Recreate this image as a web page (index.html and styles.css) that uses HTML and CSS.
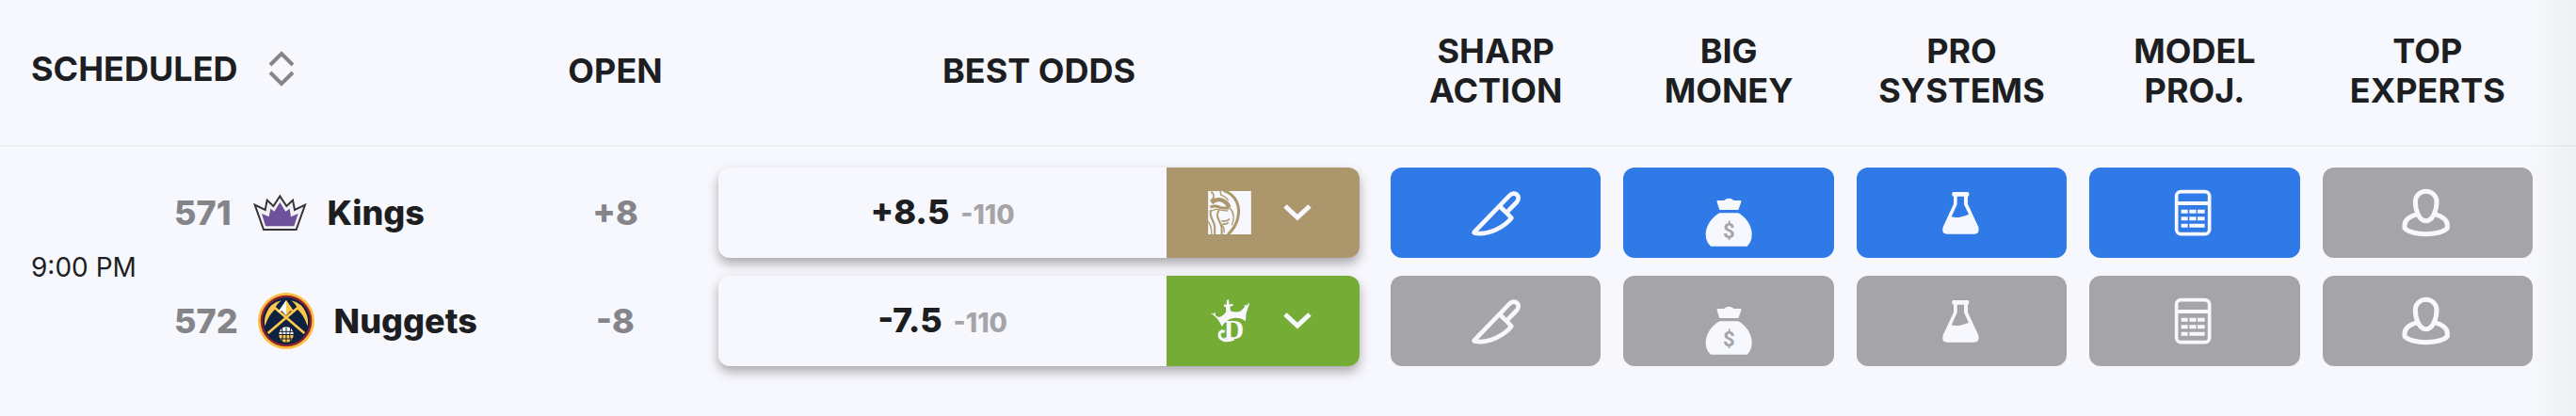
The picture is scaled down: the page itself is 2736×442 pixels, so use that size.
FILE: index.html
```html
<!DOCTYPE html>
<html lang="en">
<head>
    <meta charset="UTF-8">
    <meta name="viewport" content="width=device-width, initial-scale=1.0">
    <link rel="stylesheet" href="styles.css">
    <title>NBA Odds</title>
</head>
<body>

<!-- Shared icons -->
<svg class="sprite" aria-hidden="true">
    <symbol id="knife" viewBox="55 48 180 180">
        <path d="M76 199 L187 84 C195 75 206 75 212 81 C218 87 217 98 210 105 L178 138 L194 155 C170 184 125 207 86 204 Q71 203 76 199 Z M156 117 L178 138" fill="none" stroke="currentColor" stroke-width="14" stroke-linejoin="round"/>
    </symbol>
    <symbol id="money" viewBox="76 48 180 180" overflow="visible">
        <path d="M129 99 H151 Q167 86 183 99 H206 V104 L197 129 H137 L129 105 Z" fill="currentColor"/>
        <path d="M137 139 H197 C220 152 240 178 240 207 Q240 232 225 245 H109 Q93 232 93 207 C93 178 114 152 137 139 Z" fill="currentColor"/>
        <text x="167" y="218" class="dollar">$</text>
    </symbol>
    <symbol id="flask" viewBox="69 48 180 180">
        <path d="M134 72 H180 Q184 72 184 77 V82 Q184 86 180 86 V110 L214 184 Q219 205 202 206 H113 Q95 205 101 184 L135 110 V86 Q130 86 130 82 V77 Q130 72 134 72 Z M146 86 V112 L128 151 Q148 158 183 143 L168 112 V86 Z" fill="currentColor" fill-rule="evenodd"/>
    </symbol>
    <symbol id="calc" viewBox="64 48 180 180">
        <rect x="96" y="71" width="105" height="135" rx="14" fill="none" stroke="currentColor" stroke-width="11"/>
        <path d="M96 108 H201" stroke="currentColor" stroke-width="12"/>
        <path d="M111 134 H132 M137 134 H159 M163 134 H186 M111 157 H132 M137 157 H159 M163 157 H186 M111 179 H132 M137 179 H186" stroke="currentColor" stroke-width="12"/>
    </symbol>
    <symbol id="expert" viewBox="85 48 180 180">
        <path d="M171 70 C190 70 205 84 205 103 C205 130 193 164 171 164 C149 164 137 130 137 103 C137 84 152 70 171 70 Z" fill="none" stroke="currentColor" stroke-width="15"/>
        <path d="M143 143 C118 150 103 163 103 178 V187 C112 199 142 206 171 206 C200 206 230 199 239 187 V178 C239 163 224 150 199 143" fill="none" stroke="currentColor" stroke-width="15"/>
    </symbol>
    <symbol id="chevron" viewBox="0 0 30 20">
        <path d="M2 3 L15 15 L28 3" fill="none" stroke="currentColor" stroke-width="5"/>
    </symbol>
</svg>

<div class="odds-board">
    <table class="odds-table">
        <colgroup>
            <col class="col-time">
            <col class="col-team">
            <col class="col-open">
            <col class="col-odds">
            <col span="5">
            <col class="col-end">
        </colgroup>
        <thead>
            <tr>
                <th colspan="2" class="scheduled">
                    <button class="sort">Scheduled
                        <svg class="sort-icon" viewBox="0 0 28 40" aria-hidden="true">
                            <path d="M2 16 L14 4 L26 16 M2 24 L14 36 L26 24" fill="none" stroke="currentColor" stroke-width="4"/>
                        </svg>
                    </button>
                </th>
                <th>Open</th>
                <th>Best Odds</th>
                <th>Sharp<br>Action</th>
                <th>Big<br>Money</th>
                <th>Pro<br>Systems</th>
                <th>Model<br>Proj.</th>
                <th>Top<br>Experts</th>
                <th></th>
            </tr>
        </thead>
        <tbody>
            <tr class="away">
                <td rowspan="2" class="time">9:00 PM</td>
                <td>
                    <div class="team">
                        <span class="rotation">571</span>
                        <svg class="team-logo" viewBox="24 18 180 180" aria-hidden="true">
                            <path d="M35 83 L68 99 L74 68 L94 87 L115 55 L136 87 L156 68 L162 99 L195 83 L167 162 H63 Z" fill="#f3f1f6" stroke="#37353a" stroke-width="6"/>
                            <path d="M57 111 L80 121 L85 95 L97 104 L115 75 L133 104 L146 95 L150 121 L173 111 L160 151 H69 Z" fill="#6e519b"/>
                        </svg>
                        <span class="team-name">Kings</span>
                    </div>
                </td>
                <td class="open">+8</td>
                <td class="odds-cell">
                    <div class="odds">
                        <div class="line">+8.5 <span class="juice">-110</span></div>
                        <button class="book betmgm" aria-label="BetMGM">
                            <svg class="book-logo" viewBox="158 99 136 137" aria-hidden="true">
                                <rect x="158" y="99" width="136" height="137" fill="currentColor"/>
                                <g fill="none" stroke="#ab976b">
                                    <path d="M207 97 C250 112 260 150 252 184 C247 207 234 224 220 237" stroke-width="9"/>
                                    <path d="M196 98 L199 112 Q214 116 222 129" stroke-width="4"/>
                                    <path d="M167 101 Q178 106 175 121 L166 130" stroke-width="5"/>
                                    <path d="M169 136 C184 121 204 124 218 139 L225 151" stroke-width="13"/>
                                    <path d="M165 150 Q181 142 198 152 L224 153" stroke-width="9"/>
                                    <path d="M168 162 Q182 153 196 159 L221 162" stroke-width="4"/>
                                    <path d="M226 151 C242 170 241 190 233 207" stroke-width="4"/>
                                    <path d="M166 159 C161 185 178 192 179 213 V236" stroke-width="6"/>
                                    <path d="M192 160 C178 179 198 196 201 214 V236" stroke-width="6"/>
                                    <path d="M201 206 Q211 215 208 231 M158 196 Q169 208 169 236" stroke-width="4"/>
                                    <path d="M200 193 Q214 198 226 187 M203 203 Q215 206 222 198" stroke-width="5"/>
                                </g>
                            </svg>
                            <svg class="chevron"><use href="#chevron"/></svg>
                        </button>
                    </div>
                </td>
                <td><button class="signal active" aria-label="Sharp action"><svg><use href="#knife"/></svg></button></td>
                <td><button class="signal active" aria-label="Big money"><svg><use href="#money"/></svg></button></td>
                <td><button class="signal active" aria-label="Pro systems"><svg><use href="#flask"/></svg></button></td>
                <td><button class="signal active" aria-label="Model projection"><svg><use href="#calc"/></svg></button></td>
                <td><button class="signal" aria-label="Top experts"><svg><use href="#expert"/></svg></button></td>
                <td></td>
            </tr>
            <tr class="home">
                <td>
                    <div class="team">
                        <span class="rotation">572</span>
                        <svg class="team-logo" viewBox="39 361 180 180" aria-hidden="true">
                            <circle cx="129" cy="451" r="90" fill="#fdbe3f"/>
                            <circle cx="129" cy="451" r="82" fill="#8b2131"/>
                            <circle cx="129" cy="451" r="75" fill="#0f2140"/>
                            <path d="M71 490 L169 406 M187 490 L89 406" stroke="#fdc84b" stroke-width="8"/>
                            <path d="M113 386 Q79 394 67 423 Q57 443 61 468 Q70 440 84 424 L92 415 Q96 400 113 386 Z" fill="#fdc84b"/>
                            <path d="M145 386 Q179 394 191 423 Q201 443 197 468 Q188 440 174 424 L166 415 Q162 400 145 386 Z" fill="#fdc84b"/>
                            <path d="M129 384 L102 423 L115 419 L129 434 Z" fill="#fff"/>
                            <path d="M129 384 L156 423 L143 419 L129 434 Z" fill="#fdc84b"/>
                            <path d="M106 493 A23 23 0 0 1 152 493 Z" fill="#fff"/>
                            <path d="M106 496 A23 23 0 0 0 152 496 Z" fill="#fdc84b"/>
                            <path d="M129 471 V519 M106 485 H152 M106 508 H152 M115 473 Q121 495 115 518 M143 473 Q137 495 143 518" fill="none" stroke="#0f2140" stroke-width="3"/>
                        </svg>
                        <span class="team-name">Nuggets</span>
                    </div>
                </td>
                <td class="open">-8</td>
                <td class="odds-cell">
                    <div class="odds">
                        <div class="line">-7.5 <span class="juice">-110</span></div>
                        <button class="book draftkings" aria-label="DraftKings">
                            <svg class="book-logo" viewBox="158 445 136 136" aria-hidden="true">
                                <path d="M165 488 L175 491 L181 485 L181 495 L190 501 Q205 499 215 484 L214 469 L208 467 V461 L216 462 L217 448 L223 446 L225 461 L236 459 L237 465 L227 468 L229 482 Q248 488 262 481 L274 468 L271 463 L280 464 L286 456 L288 459 L278 490 L276 514 Q261 502 238 504 Q214 508 202 531 Q190 505 174 494 Z" fill="currentColor"/>
                                <text x="239" y="569" class="monogram">D</text>
                                <path d="M210 548 Q200 541 195 551 Q190 565 205 572 Q221 578 240 569" fill="none" stroke="currentColor" stroke-width="9"/>
                            </svg>
                            <svg class="chevron"><use href="#chevron"/></svg>
                        </button>
                    </div>
                </td>
                <td><button class="signal" aria-label="Sharp action"><svg><use href="#knife"/></svg></button></td>
                <td><button class="signal" aria-label="Big money"><svg><use href="#money"/></svg></button></td>
                <td><button class="signal" aria-label="Pro systems"><svg><use href="#flask"/></svg></button></td>
                <td><button class="signal" aria-label="Model projection"><svg><use href="#calc"/></svg></button></td>
                <td><button class="signal" aria-label="Top experts"><svg><use href="#expert"/></svg></button></td>
                <td></td>
            </tr>
        </tbody>
    </table>
</div>

</body>
</html>
```
FILE: styles.css
```css
body {
    margin: 0;
    background-color: #f7f8fd;
    color: #1d1e22;
    font-family: 'Inter', sans-serif;
    font-size: 36px;
    line-height: 42px;
}

button {
    margin: 0;
    padding: 0;
    border: none;
    background: none;
    color: inherit;
    font: inherit;
    cursor: pointer;
}

.sprite {
    display: none;
}

.odds-board {
    position: relative;
    min-height: 100vh;
}

.odds-board::after {
    content: "";
    position: absolute;
    top: 0;
    right: 0;
    bottom: 0;
    width: 48px;
    background: linear-gradient(to right, rgba(29, 30, 34, 0), rgba(29, 30, 34, 0.04));
    pointer-events: none;
}

.odds-table {
    width: 100%;
    table-layout: fixed;
    border-collapse: separate;
    border-spacing: 0;
}

.col-time {
    width: 185px;
}

.col-team {
    width: 380px;
}

.col-open {
    width: 177px;
}

.col-odds {
    width: 723px;
}

.col-end {
    width: 34px;
}

th {
    height: 150px;
    padding: 0 0 4px;
    border-bottom: 2px solid #edeef2;
    font-weight: 700;
    text-transform: uppercase;
}

th.scheduled {
    padding: 0 33px 4px;
    text-align: left;
}

.sort {
    display: flex;
    align-items: center;
    gap: 32px;
    padding-bottom: 4px;
    text-transform: uppercase;
}

.sort-icon {
    width: 28px;
    height: 40px;
    color: #858489;
}

td {
    padding: 10px 12px;
}

.away td {
    padding-top: 22px;
    padding-bottom: 9px;
}

.away .time {
    padding: 22px 0 10px 33px;
    font-size: 28px;
}

td:has(.team) {
    padding-left: 0;
}

.team {
    display: flex;
    align-items: center;
    gap: 21px;
}

.rotation,
.open {
    color: #858489;
    font-weight: 800;
}

.open {
    text-align: center;
}

.team-logo {
    width: 60px;
    height: 60px;
}

.team-name {
    font-weight: 800;
}

.odds-table .odds-cell {
    padding-left: 21px;
    padding-right: 21px;
}

.odds {
    display: flex;
    height: 96px;
    border-radius: 12px;
    background-color: #f7f8fd;
    box-shadow: 0 6px 12px rgba(29, 20, 30, 0.35);
}

.line {
    flex: 1;
    align-self: center;
    text-align: center;
    font-weight: 800;
}

.juice {
    margin-left: 4px;
    color: #a5a4a9;
    font-size: 28px;
}

.book {
    display: flex;
    align-items: center;
    justify-content: space-between;
    width: 205px;
    padding: 0 51px 0 44px;
    border-radius: 0 12px 12px 0;
    color: #f7f8fd;
}

.betmgm {
    background-color: #ab976b;
}

.draftkings {
    background-color: #74ac36;
}

.book-logo {
    width: 46px;
    height: 46px;
    overflow: visible;
}

.chevron {
    width: 30px;
    height: 20px;
}

.monogram {
    fill: currentColor;
    font: bold 88px 'Liberation Serif', serif;
    text-anchor: middle;
}

.signal {
    display: flex;
    align-items: center;
    justify-content: center;
    width: 100%;
    height: 96px;
    border-radius: 12px;
    background-color: #a5a4a9;
    color: #f7f8fd;
}

.signal.active {
    background-color: #307ae8;
}

.signal svg {
    width: 60px;
    height: 60px;
    overflow: visible;
}

.dollar {
    fill: #a5a4a9;
    font: 700 66px 'Roboto', sans-serif;
    text-anchor: middle;
}

.active .dollar {
    fill: #307ae8;
}
```
